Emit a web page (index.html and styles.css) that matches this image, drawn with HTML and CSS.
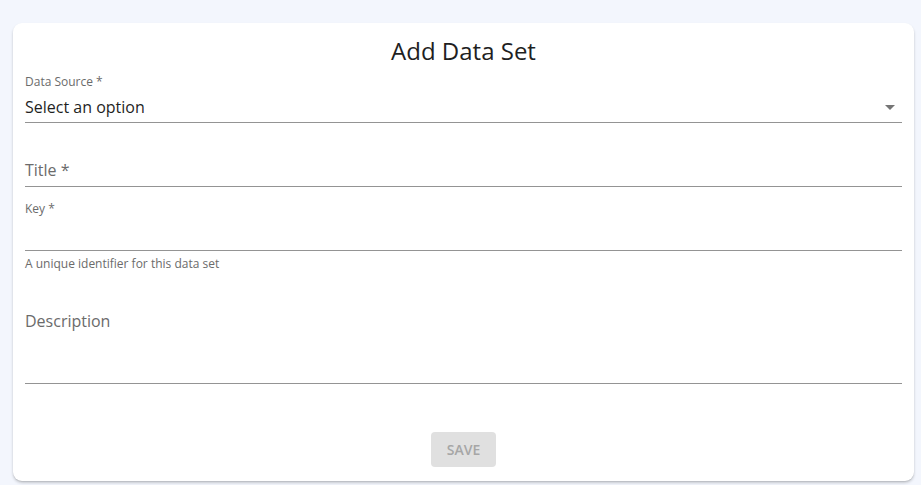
FILE: index.html
```html
<!DOCTYPE html>
<html lang="en">
<head>
<meta charset="utf-8">
<title>Add Data Set</title>
<link rel="stylesheet" href="styles.css">
</head>
<body>
<div class="card">
  <h1 class="card-title">Add Data Set</h1>
  <div class="field select-field">
    <div class="small-label">Data Source *</div>
    <div class="select-value">
      <span>Select an option</span>
      <svg class="arrow" viewBox="0 0 24 24" width="24" height="24"><path d="M7 10l5 5 5-5z" fill="#757575"/></svg>
    </div>
  </div>
  <div class="field title-field">
    <div class="big-label">Title *</div>
  </div>
  <div class="field key-field">
    <div class="small-label">Key *</div>
  </div>
  <div class="helper">A unique identifier for this data set</div>
  <div class="field desc-field">
    <div class="big-label">Description</div>
  </div>
  <div class="actions">
    <button class="save-btn" disabled>Save</button>
  </div>
</div>
</body>
</html>
```
FILE: styles.css
```css
html, body {
  margin: 0;
  padding: 0;
}
body {
  background: #f3f6fd;
  font-family: "Open Sans", "Noto Sans", sans-serif;
  padding: 23px 7px 5px 13px;
  box-sizing: border-box;
  height: 485px;
}
.card {
  background: #fff;
  border-radius: 9px;
  box-shadow: 0 2px 3px rgba(0,0,0,0.18), 0 1px 1px rgba(0,0,0,0.08);
  padding: 12px 12px 14px 12px;
}
.card-title {
  margin: 0;
  font-size: 24px;
  line-height: 32px;
  font-weight: 400;
  text-align: center;
  color: #1f1f1f;
}
.field {
  border-bottom: 1px solid #949494;
}
.small-label {
  font-size: 12px;
  line-height: 16px;
  color: #6b6b6b;
}
.big-label {
  font-size: 16px;
  line-height: 24px;
  color: #6b6b6b;
}
.select-field .small-label {
  margin-top: 7px;
}
.select-value {
  display: flex;
  justify-content: space-between;
  align-items: center;
  font-size: 16px;
  line-height: 24px;
  color: #1f1f1f;
  padding: 4px 0 3px 0;
}
.arrow {
  display: block;
  margin-right: 0;
  margin-top: 1px;
}
.title-field {
  padding: 35px 0 4px 0;
}
.key-field {
  padding-top: 14px;
  box-sizing: border-box;
  height: 64px;
}
.helper {
  font-size: 12px;
  line-height: 16px;
  color: #6b6b6b;
  margin-top: 5px;
}
.desc-field {
  padding-top: 37px;
  height: 112px;
  box-sizing: border-box;
}
.actions {
  display: flex;
  justify-content: center;
  margin-top: 48px;
}
.save-btn {
  font-family: "Open Sans", "Noto Sans", sans-serif;
  font-size: 14px;
  font-weight: 600;
  text-transform: uppercase;
  background: #e0e0e0;
  color: #a6a6a6;
  border: none;
  border-radius: 4px;
  width: 65px;
  height: 35px;
  padding: 0;
}
```
